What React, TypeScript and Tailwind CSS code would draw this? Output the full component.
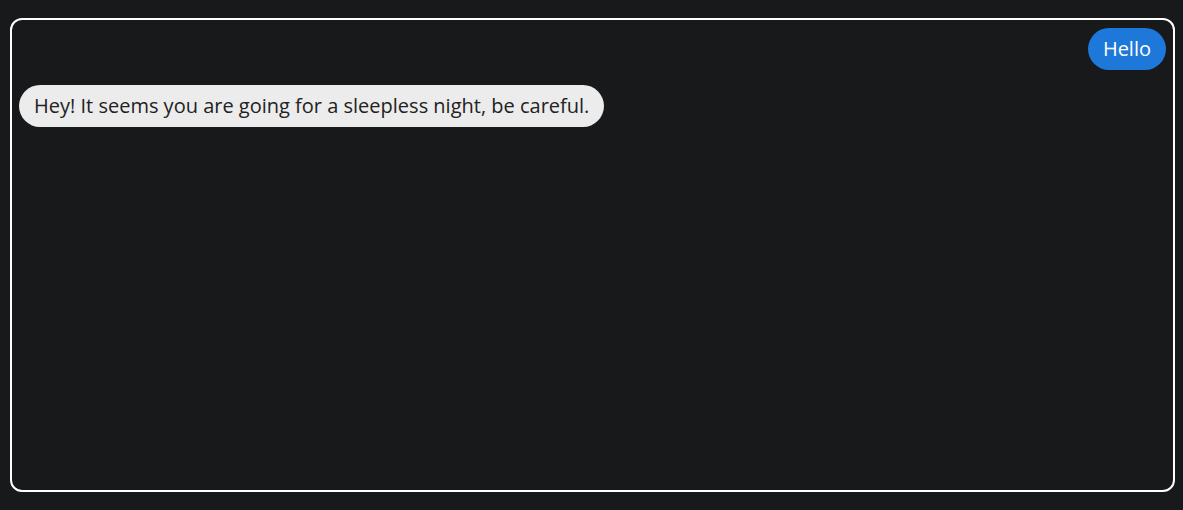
export default function App() {
  return (
    <div className="h-[510px] w-full bg-[#18191b] pl-[10px] pr-[8px] pt-[18px] pb-[18px] font-['Open_Sans',sans-serif]">
      <div className="flex h-full flex-col gap-[15px] rounded-[12px] border-2 border-white px-[7px] pt-[8px]">
        <div className="flex justify-end">
          <div className="rounded-full bg-[#1e78d9] px-[15px] py-[8px] text-[20px] leading-[26px] text-white">
            Hello
          </div>
        </div>
        <div className="flex justify-start">
          <div className="rounded-full bg-[#ececec] px-[15px] py-[8px] text-[20px] leading-[26px] text-[#222]">
            Hey! It seems you are going for a sleepless night, be careful.
          </div>
        </div>
      </div>
    </div>
  );
}
